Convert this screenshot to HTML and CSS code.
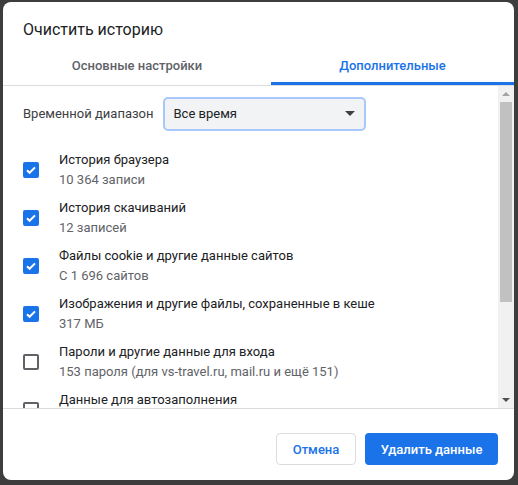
FILE: index.html
```html
<!DOCTYPE html>
<html lang="ru">
<head>
<meta charset="utf-8">
<link rel="stylesheet" href="styles.css">
</head>
<body>
<div class="dialog">
  <div class="title">Очистить историю</div>
  <div class="tabs">
    <div class="tab first">Основные настройки</div>
    <div class="tab active">Дополнительные</div>
  </div>
  <div class="body">
    <div class="content">
      <div class="range">
        <span class="range-label">Временной диапазон</span>
        <div class="select">
          <span>Все время</span>
          <svg class="caret" width="10" height="5" viewBox="0 0 10 5"><path d="M0 0h10L5 5z" fill="#3c4043"/></svg>
        </div>
      </div>
      <div class="row">
        <div class="cb on"><svg width="12" height="12" viewBox="0 0 12 12"><path d="M2 6.2l2.6 2.6L10 3.4" stroke="#fff" stroke-width="2" fill="none"/></svg></div>
        <div class="texts"><div class="t">История браузера</div><div class="s">10 364 записи</div></div>
      </div>
      <div class="row">
        <div class="cb on"><svg width="12" height="12" viewBox="0 0 12 12"><path d="M2 6.2l2.6 2.6L10 3.4" stroke="#fff" stroke-width="2" fill="none"/></svg></div>
        <div class="texts"><div class="t">История скачиваний</div><div class="s">12 записей</div></div>
      </div>
      <div class="row">
        <div class="cb on"><svg width="12" height="12" viewBox="0 0 12 12"><path d="M2 6.2l2.6 2.6L10 3.4" stroke="#fff" stroke-width="2" fill="none"/></svg></div>
        <div class="texts"><div class="t">Файлы cookie и другие данные сайтов</div><div class="s">С 1 696 сайтов</div></div>
      </div>
      <div class="row">
        <div class="cb on"><svg width="12" height="12" viewBox="0 0 12 12"><path d="M2 6.2l2.6 2.6L10 3.4" stroke="#fff" stroke-width="2" fill="none"/></svg></div>
        <div class="texts"><div class="t">Изображения и другие файлы, сохраненные в кеше</div><div class="s">317 МБ</div></div>
      </div>
      <div class="row">
        <div class="cb"></div>
        <div class="texts"><div class="t">Пароли и другие данные для входа</div><div class="s">153 пароля (для vs-travel.ru, mail.ru и ещё 151)</div></div>
      </div>
      <div class="row">
        <div class="cb"></div>
        <div class="texts"><div class="t">Данные для автозаполнения</div><div class="s">&nbsp;</div></div>
      </div>
    </div>
    <div class="scrollbar">
      <div class="arrow"><svg width="8" height="4" viewBox="0 0 8 4"><path d="M0 4h8L4 0z" fill="#a3a3a3"/></svg></div>
      <div class="track"><div class="thumb"></div></div>
      <div class="arrow"><svg width="8" height="4" viewBox="0 0 8 4"><path d="M0 0h8L4 4z" fill="#505050"/></svg></div>
    </div>
  </div>
  <div class="footer">
    <button class="btn cancel">Отмена</button>
    <button class="btn primary">Удалить данные</button>
  </div>
</div>
</body>
</html>
```

FILE: styles.css
```css
html, body {
  margin: 0;
  height: 100%;
}
body {
  background: #3d3d3d;
  padding: 2px 4px 5px 3px;
  box-sizing: border-box;
  font-family: Roboto, "Noto Sans", sans-serif;
}
.dialog {
  width: 511px;
  height: 478px;
  background: #fff;
  border-radius: 8px;
  display: flex;
  flex-direction: column;
  overflow: hidden;
}
.title {
  font-size: 16px;
  color: #202124;
  padding: 18px 20px 0 20px;
  height: 24px;
  line-height: 20px;
}
.tabs {
  display: flex;
  border-bottom: 1px solid #dadce0;
  box-sizing: border-box;
  height: 42px;
}
.tab {
  flex: 1;
  text-align: center;
  font-size: 13px;
  font-weight: 500;
  color: #5f6368;
  padding-top: 14px;
  box-sizing: border-box;
  line-height: 16px;
}
.tab.first {
  flex: 0 0 268px;
}
.tab.active {
  color: #1a73e8;
  border-bottom: 3px solid #1a73e8;
}
.body {
  display: flex;
  height: 322px;
  border-bottom: 1px solid #dadce0;
}
.content {
  flex: 1;
  overflow: hidden;
  padding: 11px 0 0 20px;
}
.range {
  display: flex;
  align-items: center;
  gap: 10px;
  height: 33px;
  margin-bottom: 16px;
}
.range-label {
  font-size: 13px;
  color: #3c4043;
}
.select {
  width: 203px;
  height: 34px;
  box-sizing: border-box;
  border: 2px solid #a8c7fa;
  background: #f1f3f4;
  border-radius: 5px;
  display: flex;
  align-items: center;
  justify-content: space-between;
  padding: 0 9px 0 8px;
  font-size: 13px;
  color: #202124;
}
.row {
  display: flex;
  align-items: center;
  height: 48px;
}
.cb {
  width: 16px;
  height: 16px;
  box-sizing: border-box;
  border: 2px solid #5f6368;
  border-radius: 2px;
  margin-right: 20px;
  display: flex;
  align-items: center;
  justify-content: center;
  flex-shrink: 0;
}
.cb.on {
  background: #1a73e8;
  border-color: #1a73e8;
}
.texts {
  font-size: 13px;
  line-height: 20px;
}
.t { color: #202124; }
.s { color: #5f6368; }
.scrollbar {
  width: 16px;
  background: #f1f1f1;
  display: flex;
  flex-direction: column;
}
.arrow {
  height: 16px;
  display: flex;
  align-items: center;
  justify-content: center;
}
.track {
  flex: 1;
  padding: 0 2px;
}
.thumb {
  height: 200px;
  background: #c1c1c1;
}
.footer {
  flex: 1;
  display: flex;
  justify-content: flex-end;
  align-items: flex-start;
  gap: 9px;
  padding: 24px 16px 0 0;
}
.btn {
  height: 32px;
  border-radius: 4px;
  font-family: Roboto, sans-serif;
  font-size: 13px;
  font-weight: 500;
  padding: 0;
  white-space: nowrap;
  cursor: pointer;
}
.cancel {
  width: 80px;
  background: #fff;
  color: #1a73e8;
  border: 1px solid #dadce0;
}
.primary {
  width: 133px;
  background: #1a73e8;
  color: #fff;
  border: none;
}
```
